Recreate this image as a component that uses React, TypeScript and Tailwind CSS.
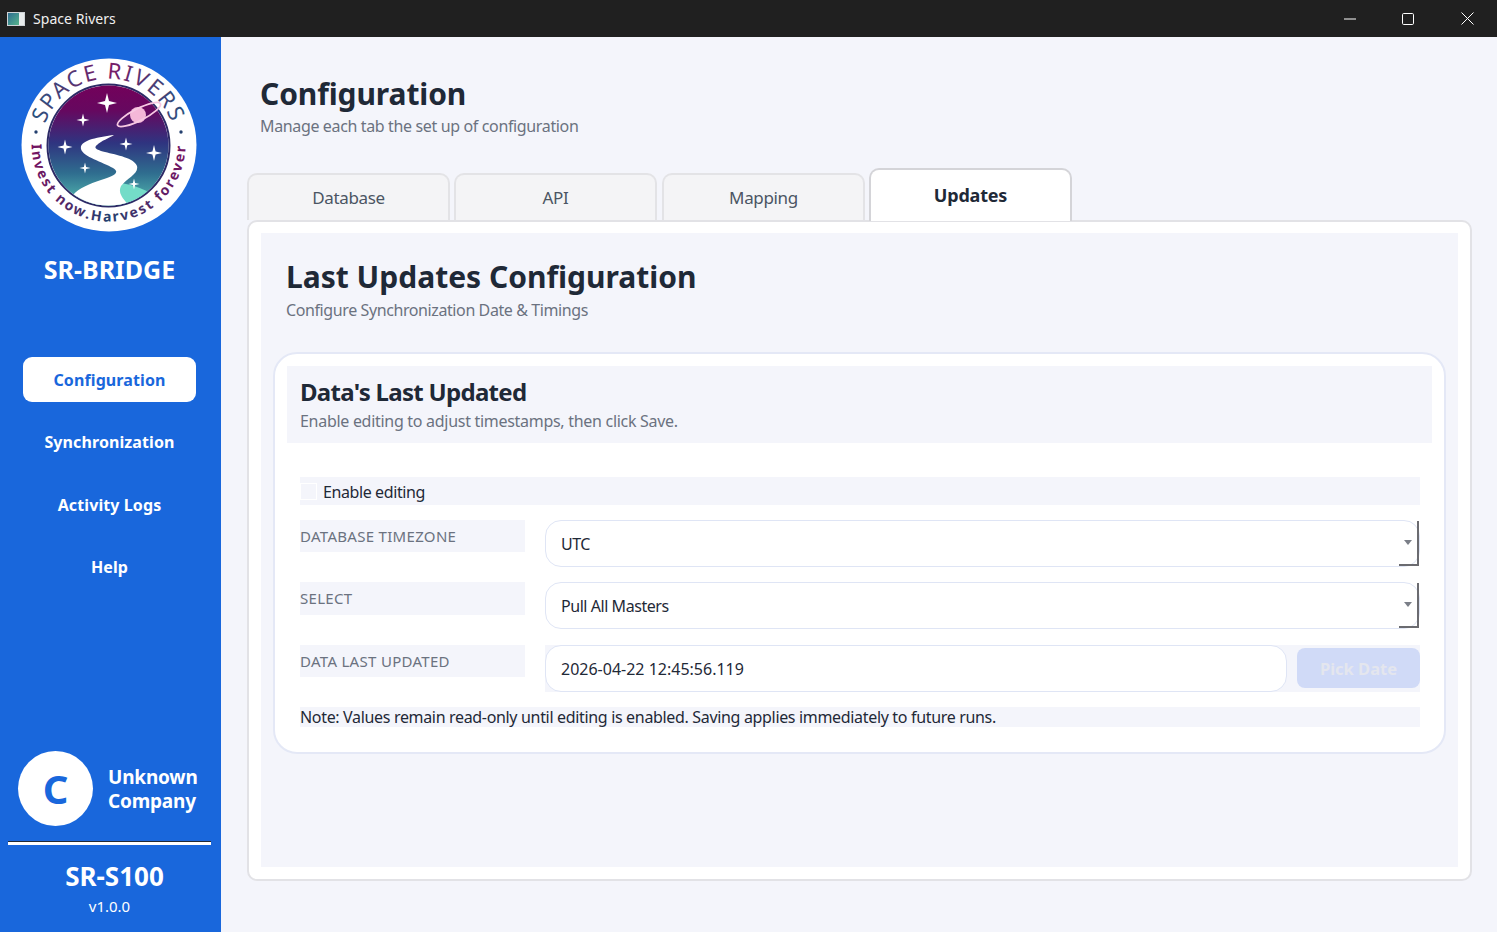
const font = { fontFamily: '"Noto Sans", "Open Sans", sans-serif' };

function Star({ x, y, r }: { x: number; y: number; r: number }) {
  const k = r * 0.2;
  return (
    <path
      d={`M${x} ${y - r}L${x + k} ${y - k}L${x + r} ${y}L${x + k} ${y + k}L${x} ${y + r}L${x - k} ${y + k}L${x - r} ${y}L${x - k} ${y - k}Z`}
      fill="#fff"
    />
  );
}

function Logo() {
  return (
    <svg width="176" height="174" viewBox="0 0 176 174" className="block">
      <defs>
        <linearGradient id="sky" x1="0" y1="0" x2="0" y2="1">
          <stop offset="0" stopColor="#74005a" />
          <stop offset="0.22" stopColor="#66085f" />
          <stop offset="0.48" stopColor="#2f3480" />
          <stop offset="0.72" stopColor="#2f6d8f" />
          <stop offset="1" stopColor="#58c4b4" />
        </linearGradient>
        <linearGradient id="top" x1="0" y1="0" x2="1" y2="0">
          <stop offset="0" stopColor="#1f5a82" />
          <stop offset="0.5" stopColor="#7a1a66" />
          <stop offset="1" stopColor="#1f5a82" />
        </linearGradient>
        <linearGradient id="bot" x1="0" y1="0" x2="1" y2="0">
          <stop offset="0" stopColor="#7a1060" />
          <stop offset="0.5" stopColor="#24406f" />
          <stop offset="1" stopColor="#7a1060" />
        </linearGradient>
        <clipPath id="disc">
          <circle cx="87.5" cy="87.5" r="60" />
        </clipPath>
        <path id="arcTop" d="M21.5 99.1A67 67 0 1 1 153.5 99.1" />
        <path id="arcBot" d="M11.7 73.1a77 77 0 1 0 151.6 0" />
      </defs>
      <ellipse cx="88" cy="87" rx="87.5" ry="86.5" fill="#fff" />
      <circle cx="87.5" cy="87.5" r="61" fill="#fff" stroke="#2c2a66" strokeWidth="2" />
      <g clipPath="url(#disc)">
        <rect x="25" y="25" width="125" height="125" fill="url(#sky)" />
        <path d="M100 125C96 134 102 145 110 152L146 152C138 136 118 128 100 125Z" fill="#74dcc8" />
        <path
          d="M93 77C78 79 58 82 60 91C62 99 82 104 92 110C100 115 92 118 80 122C68 126 58 130 52 137L60 152L112 152C104 143 96 136 100 128C106 120 118 116 116 108C113 100 96 97 84 94C76 92 72 90 76 87C80 83 88 80 93 77Z"
          fill="#fff"
        />
      </g>
      <Star x={86} y={45} r={10} />
      <Star x={62} y={62} r={6.5} />
      <Star x={44} y={89} r={7.5} />
      <Star x={105} y={86} r={6.5} />
      <Star x={133} y={95} r={8} />
      <Star x={64} y={110} r={5.5} />
      <Star x={113} y={126} r={5.5} />
      <circle cx="117" cy="57" r="8" fill="#f4b7d8" />
      <ellipse cx="118" cy="56.5" rx="24" ry="6" fill="none" stroke="#f7c8e2" strokeWidth="1.8" transform="rotate(-27 118 56.5)" />
      <text fontSize="22" fill="url(#top)" style={font} letterSpacing="2">
        <textPath href="#arcTop" startOffset="50%" textAnchor="middle">
          SPACE RIVERS
        </textPath>
      </text>
      <text fontSize="14" fontWeight="700" fill="url(#bot)" style={font} letterSpacing="2">
        <textPath href="#arcBot" startOffset="50%" textAnchor="middle">
          Invest now.Harvest forever
        </textPath>
      </text>
      <circle cx="15" cy="74" r="1.7" fill="#24406f" />
      <circle cx="160" cy="74" r="1.7" fill="#24406f" />
    </svg>
  );
}

function WindowButtons() {
  return (
    <div className="ml-auto flex items-center">
      <svg width="12" height="2" viewBox="0 0 12 2" className="mr-[46px]">
        <path d="M0 1H12" stroke="#fff" strokeWidth="1" />
      </svg>
      <svg width="12" height="12" viewBox="0 0 12 12" className="mr-[47px]">
        <rect x="0.5" y="0.5" width="11" height="11" rx="1.2" fill="none" stroke="#fff" strokeWidth="1" />
      </svg>
      <svg width="13" height="13" viewBox="0 0 13 13" className="mr-[23px]">
        <path d="M0.5 0.5L12.5 12.5M12.5 0.5L0.5 12.5" stroke="#fff" strokeWidth="1" />
      </svg>
    </div>
  );
}

function TabButton({ label }: { label: string }) {
  return (
    <div className="flex h-[47px] w-[203px] items-center justify-center rounded-t-[10px] border-x-2 border-t-2 border-[#e3e3e6] bg-[#f4f4f6] text-[17px] tracking-[-0.35px] text-[#4b5563]">
      {label}
    </div>
  );
}

function Combo({ value }: { value: string }) {
  return (
    <div className="relative flex h-[47px] w-[875px] items-center rounded-[16px] border border-[#dfe5f5] bg-white pl-[15px] text-[16px] tracking-[-0.45px] text-[#1f2937]">
      {value}
      <div className="absolute right-0 top-0 bottom-0 w-[20px] border-r-2 border-b-2 border-[#6b6b70]" />
      <div className="absolute right-[7px] top-[19px] h-0 w-0 border-x-[4.5px] border-t-[5px] border-x-transparent border-t-[#7b7f88]" />
    </div>
  );
}

function FieldLabel({ text, h }: { text: string; h: string }) {
  return (
    <div className={`w-[225px] shrink-0 bg-[#f4f5fb] pt-[4px] text-[15px] leading-[24px] tracking-[0.3px] text-[#6b7280] ${h}`}>
      {text}
    </div>
  );
}

export default function App() {
  return (
    <div className="flex h-[932px] w-[1497px] flex-col overflow-hidden bg-[#f4f5fb]" style={font}>
      {/* Title bar */}
      <div className="flex h-[37px] shrink-0 items-center bg-[#202020] text-white">
        <div className="ml-[7px] flex h-[14px] w-[18px] overflow-hidden border border-[#cfd3d6] bg-[#e8ecec]">
          <div className="h-full w-[11px] bg-gradient-to-br from-[#2f6d8f] to-[#58b48a]" />
        </div>
        <span className="ml-[8px] text-[14px] tracking-[0.05px] text-[#f0f0f0]">Space Rivers</span>
        <WindowButtons />
      </div>

      <div className="flex min-h-0 flex-1">
        {/* Sidebar */}
        <aside className="flex w-[221px] shrink-0 flex-col bg-[#1967dc] text-white">
          <div className="flex justify-center pt-[21px] pr-[3px]">
            <Logo />
          </div>
          <div className="mt-[19px] pr-[2px] text-center text-[25px] font-bold leading-[36px]">SR-BRIDGE</div>
          <nav className="mt-[70px] flex flex-col items-center pr-[2px] text-[16px] font-bold leading-[24px] tracking-[0.1px]">
            <div className="flex h-[45px] w-[173px] items-center justify-center rounded-[9px] bg-white text-[#1967dc]">
              Configuration
            </div>
            <div className="mt-[17px] flex h-[45px] items-center">Synchronization</div>
            <div className="mt-[18px] flex h-[45px] items-center">Activity Logs</div>
            <div className="mt-[17px] flex h-[45px] items-center">Help</div>
          </nav>
          <div className="mt-auto flex items-center pl-[18px]">
            <div className="flex h-[75px] w-[75px] items-center justify-center rounded-full bg-white text-[40px] font-bold text-[#1967dc]">
              C
            </div>
            <div className="ml-[15px] text-[19px] font-bold leading-[24px] tracking-[-0.2px]">
              Unknown
              <br />
              Company
            </div>
          </div>
          <div className="ml-[8px] mr-[10px] mt-[15px] h-[4px] border-t-[1px] border-[#1f2937] bg-white" />
          <div className="mt-[13px] pl-[8px] text-center text-[26px] font-bold leading-[36px]">SR-S100</div>
          <div className="mb-[16px] mt-[2px] pr-[2px] text-center text-[15px] leading-[20px]">v1.0.0</div>
        </aside>

        {/* Main */}
        <main className="flex min-w-0 flex-1 flex-col pl-[26px] pr-[25px]">
          <div className="pl-[13px] pt-[36px]">
            <h1 className="text-[30px] font-bold leading-[42px] tracking-[-0.1px] text-[#1f2937]">Configuration</h1>
            <p className="text-[16px] leading-[22px] tracking-[-0.36px] text-[#6b7280]">Manage each tab the set up of configuration</p>
          </div>

          <div className="mt-[31px] flex items-end gap-[4px]">
            <TabButton label="Database" />
            <TabButton label="API" />
            <div className="ml-[1px]">
              <TabButton label="Mapping" />
            </div>
            <div className="relative z-10 -mb-[1px] flex h-[53px] w-[203px] items-center justify-center rounded-t-[10px] border-x-2 border-t-2 border-[#d4d4d8] bg-white text-[18px] font-bold tracking-[-0.2px] text-[#1f2937]">
              Updates
            </div>
          </div>

          <div className="h-[661px] rounded-[10px] border-2 border-[#e2e2e6] bg-white px-[12px] pb-[12px] pt-[11px]">
            <div className="h-full bg-[#f4f5fb] px-[12px] pt-[19px]">
              <div className="pl-[13px]">
                <h2 className="text-[30px] font-bold leading-[50px] text-[#1f2937]">Last Updates Configuration</h2>
                <p className="text-[16px] leading-[16px] tracking-[-0.4px] text-[#6b7280]">Configure Synchronization Date &amp; Timings</p>
              </div>

              <div className="mt-[34px] h-[402px] rounded-[24px] border-2 border-[#e4e8f6] bg-white px-[12px] pt-[12px]">
                <div className="h-[77px] bg-[#f4f5fb] pl-[13px] pt-[9px]">
                  <h3 className="text-[24px] font-bold leading-[34px] tracking-[-0.7px] text-[#1f2937]">Data's Last Updated</h3>
                  <p className="mt-[1px] text-[16px] leading-[22px] tracking-[-0.29px] text-[#6b7280]">Enable editing to adjust timestamps, then click Save.</p>
                </div>

                <div className="ml-[13px] mr-[12px] mt-[34px]">
                  <div className="flex h-[28px] items-center bg-[#f4f5fb] text-[16px] tracking-[-0.4px] text-[#1f2937]">
                    <div className="h-[17px] w-[17px] border border-white bg-[#f4f5fb]" />
                    <span className="ml-[6px] pt-[1px]">Enable editing</span>
                  </div>

                  <div className="mt-[15px] flex gap-[20px]">
                    <FieldLabel text="DATABASE TIMEZONE" h="h-[32px]" />
                    <Combo value="UTC" />
                  </div>
                  <div className="mt-[15px] flex gap-[20px]">
                    <FieldLabel text="SELECT" h="h-[33px]" />
                    <Combo value="Pull All Masters" />
                  </div>
                  <div className="mt-[16px] flex gap-[20px]">
                    <FieldLabel text="DATA LAST UPDATED" h="h-[32px]" />
                    <div className="flex h-[47px] flex-1 items-center bg-[#f4f5fb]">
                      <div className="flex h-full w-[742px] items-center rounded-[16px] border border-[#dfe5f5] bg-white pl-[15px] text-[16px] text-[#1f2937]">
                        2026-04-22 12:45:56.119
                      </div>
                      <button
                        type="button"
                        disabled
                        className="mb-[2px] ml-[10px] h-[40px] w-[123px] rounded-[8px] bg-[#d0daf7] pt-[3px] text-[16.5px] font-bold text-[#e4e6ee]"
                      >
                        Pick Date
                      </button>
                    </div>
                  </div>
                  <div className="mt-[15px] h-[20px] bg-[#f4f5fb] text-[16px] leading-[20px] tracking-[-0.33px] text-[#1f2937]">
                    Note: Values remain read-only until editing is enabled. Saving applies immediately to future runs.
                  </div>
                </div>
              </div>
            </div>
          </div>
        </main>
      </div>
    </div>
  );
}
